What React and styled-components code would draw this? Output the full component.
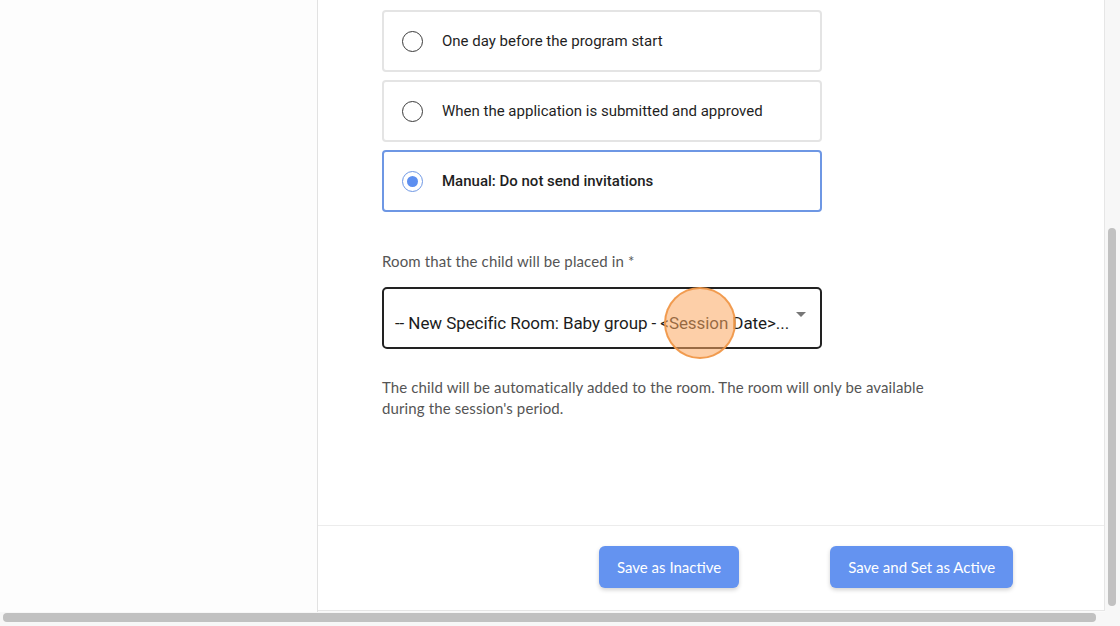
import React from "react";
import styled, { createGlobalStyle } from "styled-components";

const Global = createGlobalStyle`
  html, body { margin: 0; padding: 0; overflow: hidden; background: #fff; }
  * { box-sizing: border-box; }
`;

const Frame = styled.div`
  width: 1120px;
  height: 626px;
  display: flex;
  flex-direction: column;
  background: #fafafa;
`;

const Top = styled.div`
  flex: 1;
  display: flex;
  min-height: 0;
`;

const Sidebar = styled.aside`
  width: 318px;
  background: #fdfdfd;
  border-right: 1px solid #e2e2e2;
`;

const Panel = styled.main`
  width: 787px;
  display: flex;
  flex-direction: column;
  background: #fff;
  border-right: 1px solid #e6e6e6;
  border-bottom: 1px solid #e6e6e6;
  margin-bottom: 1px;
`;

const Content = styled.section`
  flex: 1;
  padding: 10px 0 0 64px;
`;

const Options = styled.div`
  display: flex;
  flex-direction: column;
  gap: 8px;
  width: 440px;
`;

const OptionCard = styled.label`
  height: 62px;
  display: flex;
  align-items: center;
  gap: 19px;
  padding-left: 18px;
  border: 2px solid ${({ selected }) => (selected ? "#6e97e4" : "#e4e4e4")};
  border-radius: 4px;
  font-family: Roboto, "Liberation Sans", sans-serif;
  font-size: 15px;
  font-weight: ${({ selected }) => (selected ? 500 : 400)};
  color: #1f1f1f;
`;

const Radio = styled.span`
  width: 21px;
  height: 21px;
  border-radius: 50%;
  border: 1.5px solid ${({ checked }) => (checked ? "#6e97e4" : "#3a3a3a")};
  display: flex;
  align-items: center;
  justify-content: center;

  &::after {
    content: "";
    width: 11px;
    height: 11px;
    border-radius: 50%;
    background: #5d8ff0;
    display: ${({ checked }) => (checked ? "block" : "none")};
  }
`;

const FieldLabel = styled.div`
  margin-top: 39px;
  font-family: Lato, "Liberation Sans", sans-serif;
  font-size: 15px;
  letter-spacing: 0.12px;
  color: #555;
  line-height: 20px;
`;

const SelectWrap = styled.div`
  position: relative;
  margin-top: 16px;
  width: 440px;
`;

const SelectBox = styled.div`
  height: 62px;
  border: 2px solid #222;
  border-radius: 5px;
  display: flex;
  align-items: center;
  justify-content: space-between;
  padding: 9px 14px 0 11px;
  font-family: Roboto, "Liberation Sans", sans-serif;
  font-size: 17px;
  letter-spacing: -0.08px;
  color: #1c1c1c;
`;

const Caret = styled.span`
  width: 0;
  height: 0;
  border-left: 5px solid transparent;
  border-right: 5px solid transparent;
  border-top: 5px solid #777;
  margin-top: -17px;
`;

const CursorRing = styled.span`
  position: absolute;
  left: 282px;
  top: 0px;
  width: 72px;
  height: 72px;
  border-radius: 50%;
  background: rgba(251, 168, 96, 0.55);
  border: 2px solid rgba(240, 150, 70, 0.9);
  pointer-events: none;
`;

const Help = styled.p`
  margin: 28px 0 0;
  width: 570px;
  font-family: Lato, "Liberation Sans", sans-serif;
  font-size: 15px;
  letter-spacing: 0.12px;
  line-height: 21px;
  color: #555;
`;

const Footer = styled.footer`
  height: 85px;
  border-top: 1px solid #ececec;
  display: flex;
  align-items: center;
  padding: 0 0 0 281px;
  gap: 91px;
`;

const Button = styled.button`
  height: 42px;
  padding: 0 18px;
  border: none;
  border-radius: 6px;
  background: #6493f0;
  color: #fff;
  font-family: Lato, "Liberation Sans", sans-serif;
  font-size: 15px;
  box-shadow: 0 2px 4px rgba(0, 0, 0, 0.18);
  margin-top: -2px;
`;

const VScroll = styled.div`
  width: 15px;
  background: #f7f7f7;
  padding: 228px 3px 6px 3px;
`;

const Thumb = styled.div`
  background: #c1c1c1;
  border-radius: 4px;
  width: ${({ horizontal }) => (horizontal ? "1093px" : "8px")};
  height: ${({ horizontal }) => (horizontal ? "9px" : "100%")};
`;

const HScroll = styled.div`
  height: 14px;
  background: #f7f7f7;
  padding: 1px 3px 0;
`;

const options = [
  "One day before the program start",
  "When the application is submitted and approved",
  "Manual: Do not send invitations",
];

export default function App() {
  const selected = 2;
  return (
    <>
      <Global />
      <Frame>
        <Top>
          <Sidebar />
          <Panel>
            <Content>
              <Options>
                {options.map((o, i) => (
                  <OptionCard key={o} selected={i === selected}>
                    <Radio checked={i === selected} />
                    {o}
                  </OptionCard>
                ))}
              </Options>
              <FieldLabel>Room that the child will be placed in *</FieldLabel>
              <SelectWrap>
                <SelectBox>
                  <span>-- New Specific Room: Baby group - &lt;Session Date&gt;...</span>
                  <Caret />
                </SelectBox>
                <CursorRing />
              </SelectWrap>
              <Help>
                The child will be automatically added to the room. The room will only be available
                during the session's period.
              </Help>
            </Content>
            <Footer>
              <Button>Save as Inactive</Button>
              <Button>Save and Set as Active</Button>
            </Footer>
          </Panel>
          <VScroll>
            <Thumb />
          </VScroll>
        </Top>
        <HScroll>
          <Thumb horizontal />
        </HScroll>
      </Frame>
    </>
  );
}
